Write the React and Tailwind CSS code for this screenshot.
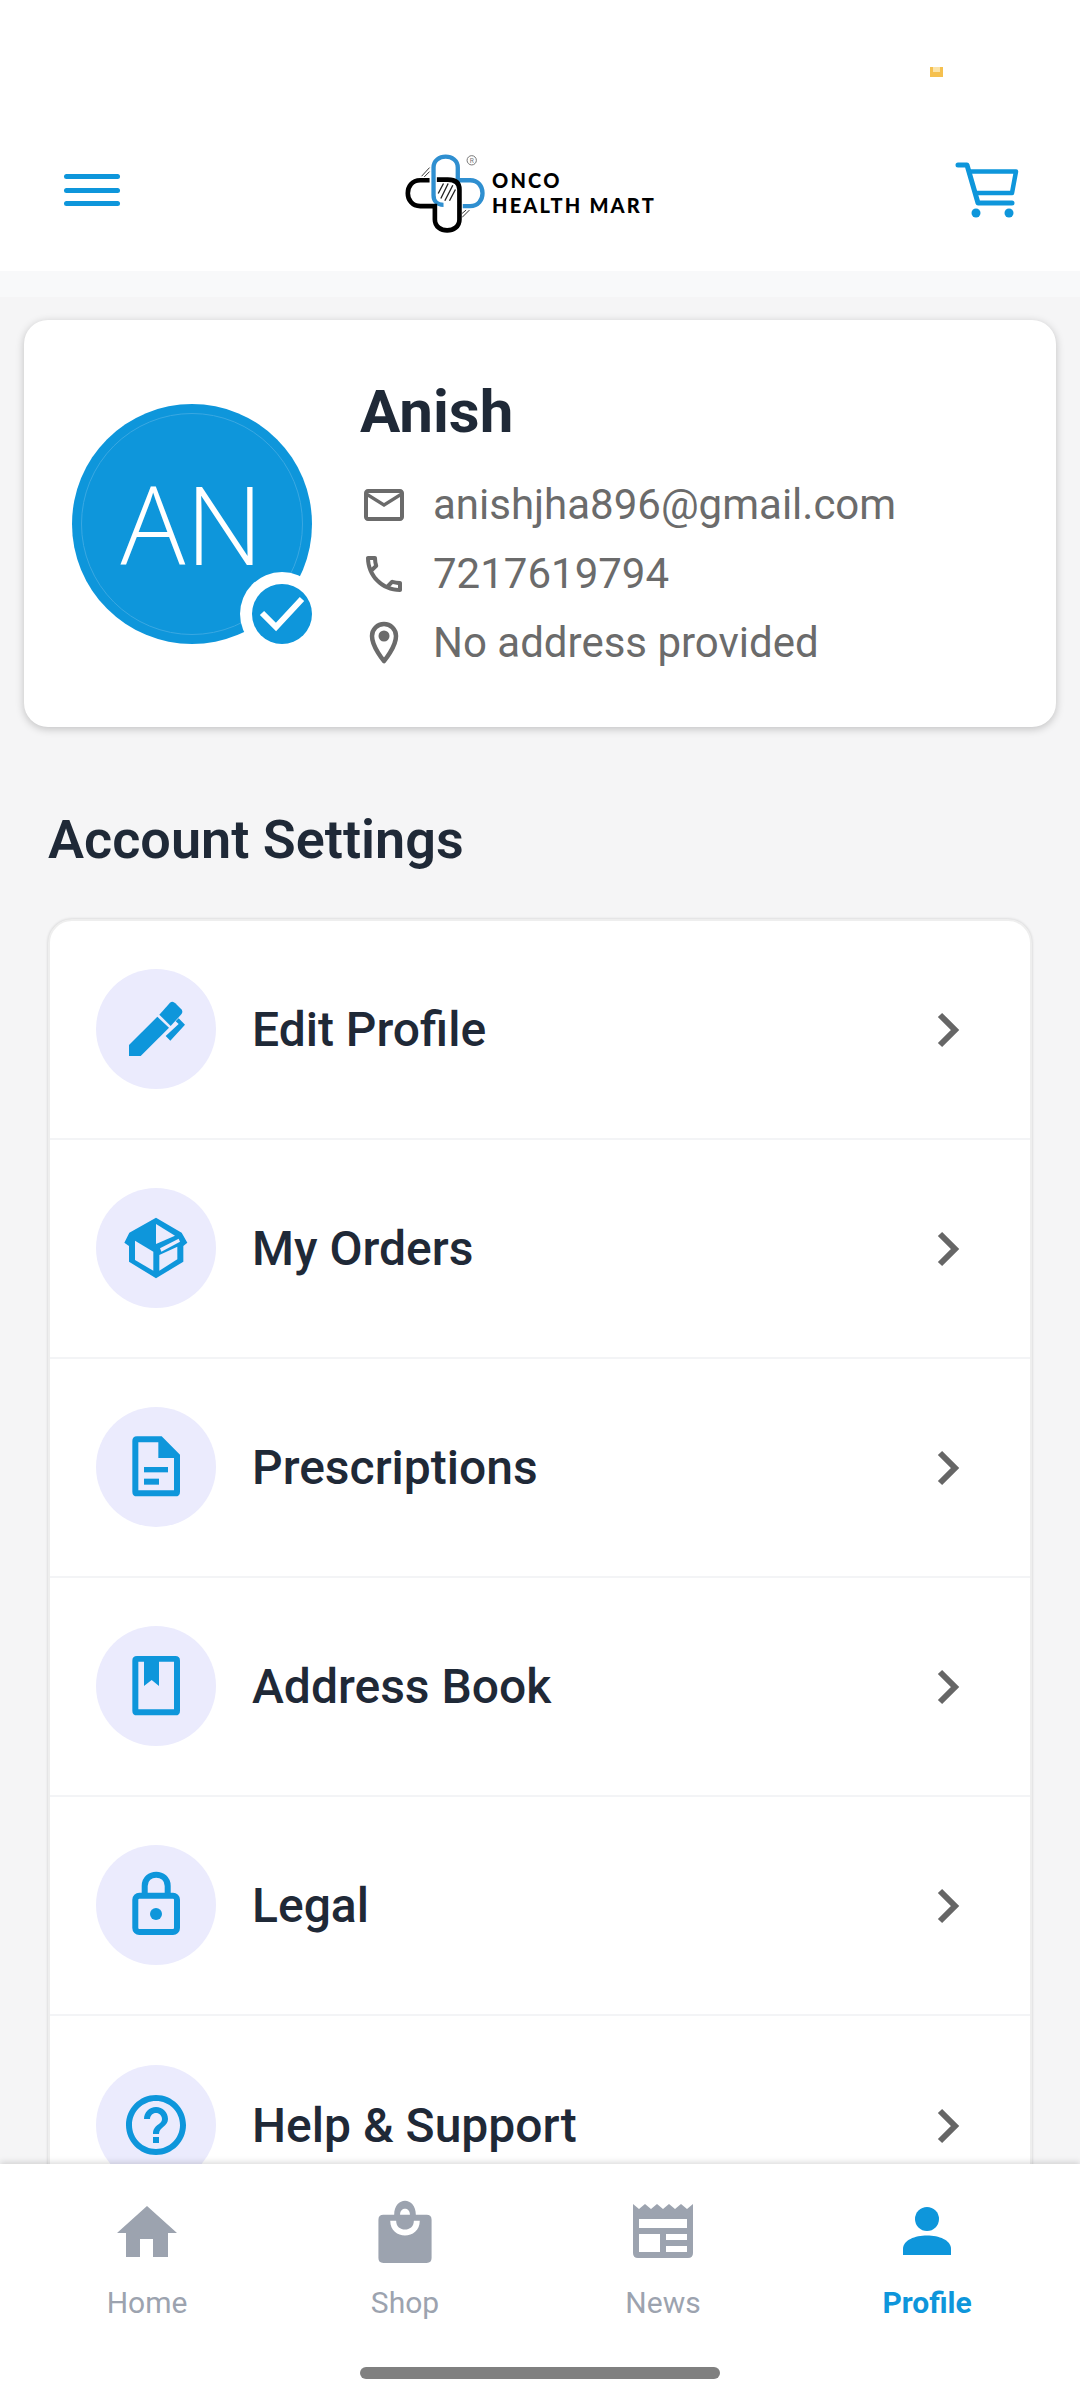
import { MdOutlineHelpOutline, MdOutlineMailOutline, MdOutlineCall } from "react-icons/md";

const blue = "#0e96db";
const gray = "#9ca3af";

const Logo = () => (
  <div className="flex items-center mt-[6px] mr-[16px]">
    <svg width="83" height="87" viewBox="70 60 250 260" fill="none">
      <path d="M192 224 C172 224 162 212 162 195 L162 112 C162 68 235 68 235 112 L235 150 L272 150 C322 150 322 228 272 228 L250 228" stroke="#2f8fd0" strokeWidth="13" />
      <path d="M150 150 L122 150 C72 150 72 228 122 228 L166 228 L166 268 C166 312 240 312 240 268 L240 178 C240 155 225 148 205 148 L172 148" stroke="#000" strokeWidth="14" />
      <path d="M176 190 L192 160 M184 205 L206 160 M196 212 L220 165 M210 212 L228 178" stroke="#222" strokeWidth="4" />
      <path d="M126 138 L150 112 M134 140 L150 124 M248 262 L270 240 M248 250 L260 240" stroke="#333" strokeWidth="3" />
      <circle cx="277" cy="90" r="14" stroke="#777" strokeWidth="3" />
      <text x="277" y="97" textAnchor="middle" fontSize="20" fill="#777" fontFamily="Roboto, sans-serif">R</text>
    </svg>
    <div className="ml-[6px] font-['Lato',sans-serif] font-black text-black leading-[25px] text-[20px] tracking-[2.2px]">
      <div>ONCO</div>
      <div className="whitespace-nowrap">HEALTH MART</div>
    </div>
  </div>
);

const Hamburger = () => (
  <div className="flex flex-col gap-[8.5px] w-[56px]">
    <div className="h-[5px] rounded-sm bg-[#0e96db]" />
    <div className="h-[5px] rounded-sm bg-[#0e96db]" />
    <div className="h-[5px] rounded-sm bg-[#0e96db]" />
  </div>
);

const Cart = () => (
  <svg width="64" height="56" viewBox="0 0 64 56" fill="none">
    <path d="M3 3 L12 3 L23 41 L57 41" stroke={blue} strokeWidth="5" strokeLinecap="round" strokeLinejoin="round" />
    <path d="M14 9.5 L61 9.5 L57 31 L19 31" stroke={blue} strokeWidth="4.5" strokeLinejoin="round" />
    <circle cx="21" cy="51" r="4.5" fill={blue} />
    <circle cx="54" cy="51" r="4.5" fill={blue} />
  </svg>
);

const PinIcon = () => (
  <svg width="48" height="48" viewBox="0 0 48 48" fill="none" className="mr-[25px]">
    <path d="M24 42 C24 42 12 28 12 17 A12 12 0 0 1 36 17 C36 28 24 42 24 42 Z" stroke="#6b6b6b" strokeWidth="4.5" strokeLinejoin="round" />
    <circle cx="24" cy="17" r="5.5" fill="#6b6b6b" />
  </svg>
);

const PenIcon = () => (
  <svg width="120" height="120" viewBox="78 57 360 360">
    <path fill={blue} d="M177 318 L177 285 L262 200 L297 233 L212 318 Z" />
    <path fill={blue} d="M268 194 L300 158 Q308 152 316 160 L334 178 Q340 185 334 193 L302 228 Z" />
    <path fill={blue} d="M326 205 L345 224 L301 272 L287 258 L326 222 L317 214 Z" />
  </svg>
);

const BoxIcon = () => (
  <svg width="120" height="120" viewBox="78 714 360 360">
    <path fill={blue} d="M258 803 L335 848 L352 878 L340 888 L340 935 L258 985 L177 935 L177 888 L163 878 L178 848 Z" />
    <path fill="#ebebfd" d="M258 822 L315 857 L258 882 Z" />
    <path fill="#ebebfd" d="M195 872 L250 905 L250 962 L195 930 Z" />
    <path fill="#ebebfd" d="M268 915 L322 890 L322 928 L268 962 Z" />
    <path fill="#ebebfd" d="M270 895 L326 866 L330 875 L274 905 Z" />
  </svg>
);

const DocIcon = () => (
  <svg width="120" height="120" viewBox="78 52 360 360">
    <path fill={blue} fillRule="evenodd" d="M201 140 L275 140 L330 195 L330 306 Q330 320 316 320 L201 320 Q187 320 187 306 L187 154 Q187 140 201 140 Z M205 158 L205 302 L312 302 L312 205 L265 205 L265 158 Z" />
    <rect x="222" y="232" width="72" height="16" fill={blue} />
    <rect x="222" y="267" width="45" height="18" fill={blue} />
  </svg>
);

const BookIcon = () => (
  <svg width="120" height="120" viewBox="78 708 360 360">
    <path fill={blue} fillRule="evenodd" d="M201 798 L316 798 Q330 798 330 812 L330 962 Q330 976 316 976 L201 976 Q187 976 187 962 L187 812 Q187 798 201 798 Z M205 815 L205 958 L312 958 L312 815 L267 815 L267 888 L245 870 L222 888 L222 815 Z" />
  </svg>
);

const LockIcon = () => (
  <svg width="120" height="120" viewBox="0 0 120 120" fill="none">
    <rect x="39.3" y="50.7" width="41.7" height="36.3" rx="4" stroke={blue} strokeWidth="6" />
    <path d="M48.7 50 L48.7 41 C48.7 26 71.7 26 71.7 41 L71.7 50" stroke={blue} strokeWidth="6" />
    <circle cx="60" cy="69" r="6" fill={blue} />
  </svg>
);

const Chevron = () => (
  <svg width="28" height="36" viewBox="0 0 28 36" fill="none">
    <path d="M5 3 L20 18 L5 33" stroke="#666" strokeWidth="6" />
  </svg>
);

const rows = [
  { label: "Edit Profile", icon: <PenIcon /> },
  { label: "My Orders", icon: <BoxIcon /> },
  { label: "Prescriptions", icon: <DocIcon /> },
  { label: "Address Book", icon: <BookIcon /> },
  { label: "Legal", icon: <LockIcon /> },
  { label: "Help & Support", icon: <MdOutlineHelpOutline size={72} color={blue} /> },
];

const Row = ({ row, last }) => (
  <div className={`flex items-center h-[219px] shrink-0 pl-[46px] pr-[67px] ${last ? "" : "border-b-2 border-[#f3f4f6]"}`}>
    <div className="w-[120px] h-[120px] rounded-full bg-[#ebebfd] flex items-center justify-center shrink-0 -mt-[1px]">{row.icon}</div>
    <div className="ml-[36px] flex-1 text-[48px] font-medium text-[#1f2937]">{row.label}</div>
    <Chevron />
  </div>
);

const NavItem = ({ label, active, children }) => (
  <div className="flex flex-col items-center">
    <div className="h-[66px] flex items-center justify-center">{children}</div>
    <div className={`mt-[21px] text-[30px] leading-[36px] ${active ? "font-bold text-[#0e96db]" : "text-[#9ca3af]"}`}>{label}</div>
  </div>
);

export default function App() {
  return (
    <div className="w-[1080px] h-[2400px] flex flex-col overflow-hidden bg-[#f5f5f6] font-['Roboto',sans-serif]">
      <div className="h-[271px] shrink-0 bg-white flex flex-col">
        <div className="h-[130px] flex justify-end pr-[137px] pt-[67px]">
          <svg width="13" height="10" viewBox="0 0 13 10">
            <path fill="#f5c04f" d="M0 0 L3 0 L3 5 L10 5 L10 0 L13 0 L13 10 L0 10 Z" />
            <path fill="#fbe3a8" d="M3 0 L10 0 L10 5 L3 5 Z" />
          </svg>
        </div>
        <div className="flex-1 flex items-center justify-between pl-[64px] pr-[61px] pb-[21px]">
          <Hamburger />
          <Logo />
          <Cart />
        </div>
      </div>
      <div className="h-[26px] shrink-0 bg-[#f8f9fa]" />

      <div className="flex-1 min-h-0 overflow-hidden px-[24px] pt-[23px]">
        <div className="h-[407px] bg-white rounded-[24px] shadow-[0_2px_8px_rgba(0,0,0,0.22)] flex items-center pl-[48px]">
          <div className="relative w-[240px] h-[240px] rounded-full bg-[#0e96db] flex items-center justify-center shrink-0">
            <div className="absolute inset-[9px] rounded-full border border-[#3aa8e2]" />
            <span className="font-['Open_Sans',sans-serif] font-[350] text-white text-[108px] leading-none">AN</span>
            <div className="absolute right-[-12px] bottom-[-12px] w-[84px] h-[84px] rounded-full bg-white flex items-center justify-center">
              <div className="w-[60px] h-[60px] rounded-full bg-[#0e96db] flex items-center justify-center">
                <svg width="60" height="60" viewBox="0 0 60 60" fill="none">
                  <path d="M10 29 L24 43 L50 15" stroke="#fff" strokeWidth="6" />
                </svg>
              </div>
            </div>
          </div>
          <div className="ml-[48px] flex flex-col">
            <div className="text-[60px] font-bold text-[#1f2937] leading-[70px] mb-[30px]">Anish</div>
            <div className="flex flex-col gap-[13px] text-[42px] leading-[56px] text-[#6b6b6b]">
              <div className="flex items-center"><MdOutlineMailOutline size={48} className="mr-[25px]" />anishjha896@gmail.com</div>
              <div className="flex items-center"><MdOutlineCall size={48} className="mr-[25px]" />7217619794</div>
              <div className="flex items-center"><PinIcon />No address provided</div>
            </div>
          </div>
        </div>

        <div className="px-[24px] mt-[80px] text-[54px] leading-[66px] font-semibold text-[#1f2937]">Account Settings</div>

        <div className="mx-[24px] mt-[46px] bg-white rounded-[24px] border-2 border-[#eeeeee] shadow-[0_0_3px_rgba(0,0,0,0.18)] overflow-hidden">
          {rows.map((row, i) => (
            <Row key={row.label} row={row} last={i === rows.length - 1} />
          ))}
        </div>
      </div>

      <div className="h-[236px] shrink-0 bg-white shadow-[0_-2px_6px_rgba(0,0,0,0.14)] relative flex flex-col">
        <div className="grid grid-cols-[258px_258px_258px_270px] pt-[34px] pl-[18px]">
          <NavItem label="Home">
            <svg width="60" height="51" viewBox="0 0 60 51">
              <path fill={gray} d="M30 0 L60 27 L51 27 L51 51 L36 51 L36 33 L23 33 L23 51 L9 51 L9 27 L0 27 Z" />
            </svg>
          </NavItem>
          <NavItem label="Shop">
            <svg width="54" height="63" viewBox="0 0 54 64">
              <path fill={gray} fillRule="evenodd" d="M16 15 C16 -4 38 -4 38 15 L49 15 Q54 15 54 20 L54 59 Q54 64 49 64 L5 64 Q0 64 0 59 L0 20 Q0 15 5 15 Z M22 15 L32 15 C32 7 22 7 22 15 Z M12 21 C12 41 42 41 42 21 L36 21 C36 33 18 33 18 21 Z" />
            </svg>
          </NavItem>
          <NavItem label="News">
            <svg width="60" height="54" viewBox="0 0 60 54">
              <path fill={gray} fillRule="evenodd" d="M0 0 L6 5 L12 0 L18 5 L24 0 L30 5 L36 0 L42 5 L48 0 L54 5 L60 0 L60 49 Q60 54 55 54 L5 54 Q0 54 0 49 Z M6 15 L6 24 L54 24 L54 15 Z M6 30 L6 48 L27 48 L27 30 Z M33 30 L33 36 L54 36 L54 30 Z M33 42 L33 48 L54 48 L54 42 Z" />
            </svg>
          </NavItem>
          <NavItem label="Profile" active>
            <svg width="48" height="48" viewBox="0 0 48 48">
              <circle cx="24" cy="12" r="12" fill={blue} />
              <path fill={blue} d="M0 48 L0 42 C0 24 48 24 48 42 L48 48 Z" />
            </svg>
          </NavItem>
        </div>
        <div className="absolute left-[360px] bottom-[21px] w-[360px] h-[12px] rounded-full bg-[#808080]" />
      </div>
    </div>
  );
}
